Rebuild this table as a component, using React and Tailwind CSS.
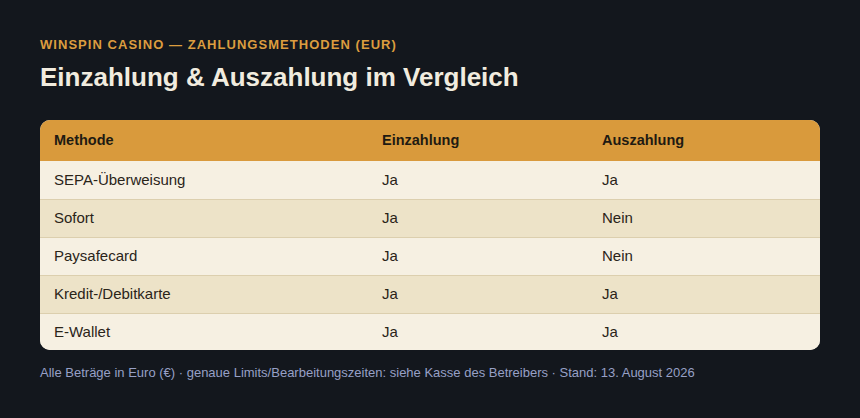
export default function App() {
  const rows = [
    ["SEPA-Überweisung", "Ja", "Ja"],
    ["Sofort", "Ja", "Nein"],
    ["Paysafecard", "Ja", "Nein"],
    ["Kredit-/Debitkarte", "Ja", "Ja"],
    ["E-Wallet", "Ja", "Ja"],
  ];
  return (
    <div className="w-[860px] h-[418px] bg-[#13171d] px-10 pt-[37px]" style={{ fontFamily: '"Liberation Sans", Arial, sans-serif' }}>
      <div className="text-[13px] font-bold tracking-[0.08em] text-[#dc9d3f] leading-[16px]">
        WINSPIN CASINO — ZAHLUNGSMETHODEN (EUR)
      </div>
      <h1 className="mt-[9px] text-[26px] font-bold leading-[30px] text-[#f1ecdf]">
        Einzahlung &amp; Auszahlung im Vergleich
      </h1>
      <div className="mt-[28px] w-[780px] rounded-[10px] overflow-hidden bg-[#f6f0e2]">
        <div className="grid grid-cols-[328px_220px_1fr] h-[41px] items-center bg-[#d99a3c] text-[14.5px] font-bold text-[#1f1a12]">
          <div className="pl-[14px]">Methode</div>
          <div className="pl-[14px]">Einzahlung</div>
          <div className="pl-[14px]">Auszahlung</div>
        </div>
        {rows.map((r, i) => (
          <div
            key={i}
            className={`grid grid-cols-[328px_220px_1fr] items-center text-[15px] text-[#2a2419] ${i % 2 === 1 ? "bg-[#ede3c8]" : "bg-[#f6f0e2]"} ${i > 0 ? "border-t border-[#dccfae]" : ""} ${i === 4 ? "h-[37px]" : "h-[38px]"}`}
          >
            <div className="pl-[14px]">{r[0]}</div>
            <div className="pl-[14px]">{r[1]}</div>
            <div className="pl-[14px]">{r[2]}</div>
          </div>
        ))}
      </div>
      <div className="mt-[15px] text-[13px] text-[#97a0c6] leading-[16px]">
        Alle Beträge in Euro (€) · genaue Limits/Bearbeitungszeiten: siehe Kasse des Betreibers · Stand: 13. August 2026
      </div>
    </div>
  );
}
